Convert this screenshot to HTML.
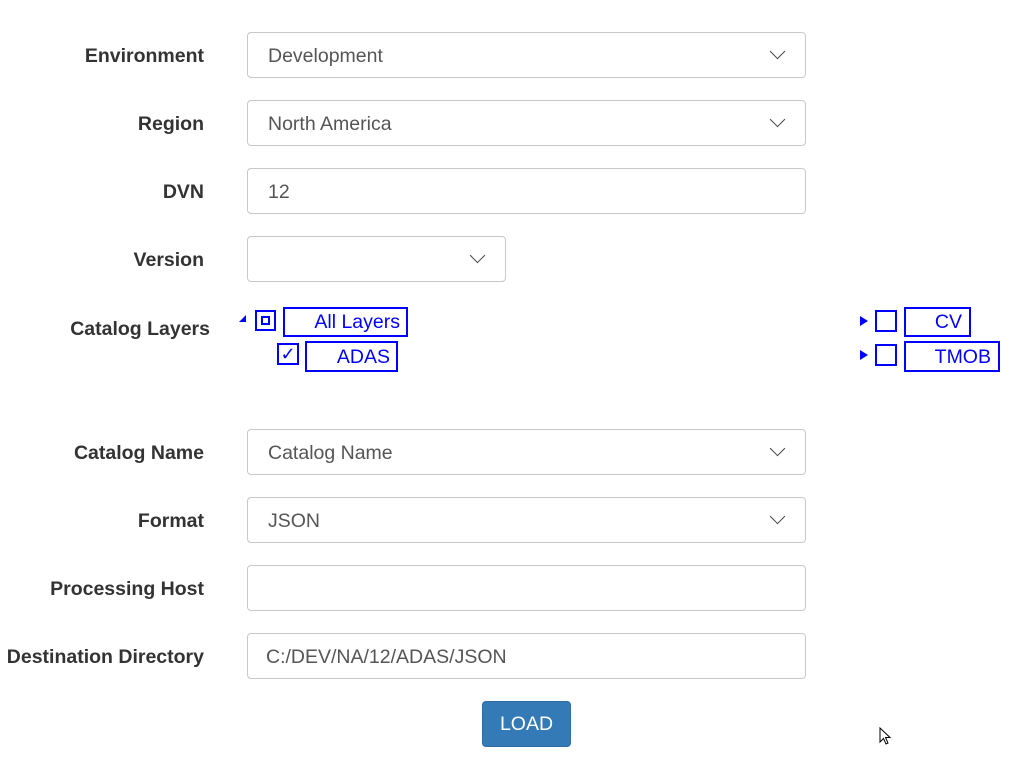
<!DOCTYPE html>
<html><head><style>
body{margin:0;width:1024px;height:762px;background:#fff;font-family:"Liberation Sans",sans-serif;position:relative;overflow:hidden}
.l{position:absolute;font-weight:bold;font-size:19.5px;color:#333;text-align:right;width:260px}
.i{position:absolute;left:247px;border:1px solid #c8c8c8;border-radius:4px;font-size:19.5px;color:#555;line-height:46px;padding-left:20px;box-sizing:border-box;width:559px;height:46px}
.c{position:absolute;right:22px;top:13px;width:10px;height:10px;border-right:1.5px solid #444;border-bottom:1.5px solid #444;transform:rotate(45deg)}
.b{position:absolute;border:2px solid #00f;box-sizing:border-box;color:#00f;font-size:19.5px;text-align:right;line-height:27px}
.t{position:absolute;width:0;height:0}
</style></head><body>
<div class="l" style="left:-56px;top:45px">Environment</div>
<div class="i" style="top:32px">Development<span class="c"></span></div>
<div class="l" style="left:-56px;top:113px">Region</div>
<div class="i" style="top:100px">North America<span class="c"></span></div>
<div class="l" style="left:-56px;top:181px">DVN</div>
<div class="i" style="top:168px">12</div>
<div class="l" style="left:-56px;top:249px">Version</div>
<div class="i" style="top:236px;width:259px"><span class="c"></span></div>
<div class="l" style="left:-50px;top:318px">Catalog Layers</div>
<div class="t" style="left:239px;top:315px;border-left:7px solid transparent;border-bottom:7px solid #00f"></div>
<div class="b" style="left:255px;top:310px;width:21px;height:21px"><div style="position:absolute;left:4px;top:4px;width:9px;height:9px;border:2px solid #00f;box-sizing:border-box"></div></div>
<div class="b" style="left:283px;top:307px;width:125px;height:30px;padding-right:6px">All Layers</div>
<div class="b" style="left:277px;top:343px;width:22px;height:22px;text-align:center;line-height:18px;font-size:18px">✓</div>
<div class="b" style="left:305px;top:341px;width:93px;height:31px;padding-right:6px;line-height:28px">ADAS</div>
<div class="t" style="left:860px;top:316px;border-top:5px solid transparent;border-bottom:5px solid transparent;border-left:8px solid #00f"></div>
<div class="b" style="left:875px;top:310px;width:22px;height:22px"></div>
<div class="b" style="left:904px;top:307px;width:67px;height:30px;padding-right:7px">CV</div>
<div class="t" style="left:860px;top:350px;border-top:5px solid transparent;border-bottom:5px solid transparent;border-left:8px solid #00f"></div>
<div class="b" style="left:875px;top:344px;width:22px;height:22px"></div>
<div class="b" style="left:904px;top:341px;width:96px;height:31px;padding-right:7px;line-height:28px">TMOB</div>
<div class="l" style="left:-56px;top:442px">Catalog Name</div>
<div class="i" style="top:429px">Catalog Name<span class="c"></span></div>
<div class="l" style="left:-56px;top:510px">Format</div>
<div class="i" style="top:497px">JSON<span class="c"></span></div>
<div class="l" style="left:-56px;top:578px">Processing Host</div>
<div class="i" style="top:565px"></div>
<div class="l" style="left:-56px;top:646px">Destination Directory</div>
<div class="i" style="top:633px;padding-left:18px">C:/DEV/NA/12/ADAS/JSON</div>
<div style="position:absolute;left:482px;top:701px;width:89px;height:46px;background:#337ab7;border:1px solid #2e6da4;box-sizing:border-box;border-radius:4px;color:#fff;font-size:19.5px;text-align:center;line-height:45px">LOAD</div>
<svg style="position:absolute;left:879px;top:727px" width="14" height="20"><path d="M1 1 L1 15 L4.5 11.5 L7 17 L9 16 L6.5 10.5 L11 10.5 Z" fill="#fff" stroke="#000"/></svg>
</body></html>
